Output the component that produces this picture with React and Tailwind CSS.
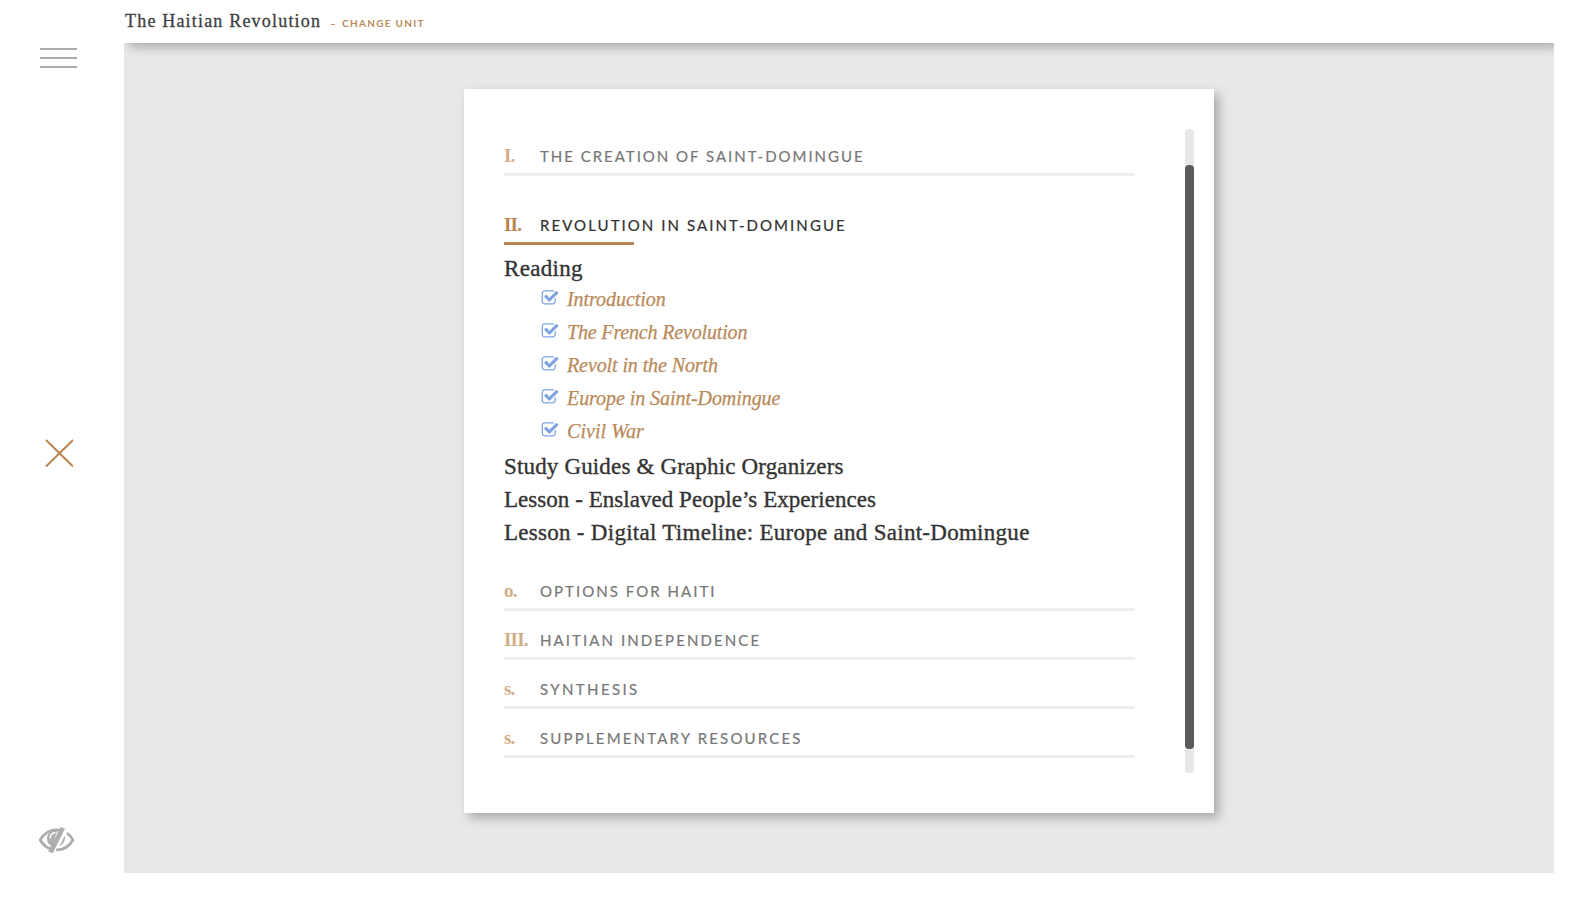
import React from "react";

const readings = [
  { title: "Introduction", tracking: "tracking-[-0.04px]" },
  { title: "The French Revolution", tracking: "tracking-[-0.16px]" },
  { title: "Revolt in the North", tracking: "tracking-[-0.1px]" },
  { title: "Europe in Saint-Domingue", tracking: "tracking-[-0.06px]" },
  { title: "Civil War", tracking: "tracking-[0.05px]" },
];

const lessons = [
  { title: "Study Guides & Graphic Organizers", tracking: "tracking-[0.16px]" },
  { title: "Lesson - Enslaved People’s Experiences", tracking: "tracking-[0.04px]" },
  { title: "Lesson - Digital Timeline: Europe and Saint-Domingue", tracking: "tracking-[0.28px]" },
];

const laterChapters = [
  { mark: "o.", title: "OPTIONS FOR HAITI", tracking: "tracking-[2.03px]" },
  { mark: "III.", title: "HAITIAN INDEPENDENCE", tracking: "tracking-[2.09px]" },
  { mark: "s.", title: "SYNTHESIS", tracking: "tracking-[2.38px]" },
  { mark: "s.", title: "SUPPLEMENTARY RESOURCES", tracking: "tracking-[2.18px]" },
];

function CheckIcon() {
  return (
    <svg viewBox="0 0 1792 1792" className="size-[18px] shrink-0 fill-[#7ea3e0]" aria-hidden="true">
      <path d="M1472 930v318q0 119-84.5 203.5t-203.5 84.5h-832q-119 0-203.5-84.5t-84.5-203.5v-832q0-119 84.5-203.5t203.5-84.5h832q63 0 117 25 15 7 18 23 3 17-9 29l-49 49q-10 10-23 10-3 0-9-2-23-6-45-6h-832q-66 0-113 47t-47 113v832q0 66 47 113t113 47h832q66 0 113-47t47-113v-254q0-13 9-22l64-64q10-10 23-10 6 0 12 3 20 8 20 29zm231-489l-814 814q-24 24-57 24t-57-24l-430-430q-24-24-24-57t24-57l110-110q24-24 57-24t57 24l263 263 647-647q24-24 57-24t57 24l110 110q24 24 24 57t-24 57z" />
    </svg>
  );
}

function EyeOffIcon() {
  return (
    <svg viewBox="0 0 38 28" className="h-7 w-[38px]" fill="none" aria-hidden="true">
      <g stroke="#adadad" strokeWidth="2.7">
        <path d="M22 4.3C12 2.6 6 7.500 2.200 14c2.700 4.700 6.200 7.700 11 9" />
        <path d="M29 7.200c2.700 1.800 4.600 4.200 5.900 6.800-3.700 6.600-9.400 10-16.700 9.900" />
      </g>
      <path d="M19.500 3.800c-7-.2-10.500 4-10.500 8.700 0 3.600 1.800 6.500 5 8z" fill="#adadad" />
      <path d="M26.800 9.800c.8 4-1 8.300-5.300 10.200z" fill="#adadad" />
      <path d="M12.300 12c0-3 1.700-5 4.700-5.300" stroke="#fff" strokeWidth="1.500" strokeLinecap="round" />
      <path d="M22.600 1L27 2.500 14.800 27.200 10.200 25.500z" fill="#adadad" />
    </svg>
  );
}

function Chapter({ mark, title, tracking, className }) {
  return (
    <a className={`flex w-[631px] shrink-0 items-end border-b-[3px] border-[#eeeeee] pb-[7px] ${className}`}>
      <span className="flex items-baseline leading-5">
        <span className="w-9 font-['Liberation_Serif',serif] text-[19px] font-bold tracking-[-0.8px] text-[#d2ad87]">{mark}</span>
        <span className={`whitespace-nowrap font-[Lato,sans-serif] text-[15px] text-[#777777] [-webkit-text-stroke:0.2px] ${tracking}`}>{title}</span>
      </span>
    </a>
  );
}

export default function App() {
  return (
    <div className="flex h-[902px] w-[1579px] overflow-hidden bg-white pb-[29px] pr-[25px]">
      <aside className="flex w-[124px] shrink-0 flex-col items-start pt-12">
        <button className="ml-10 flex w-[37px] flex-col gap-[7px]" aria-label="Menu">
          <span className="h-0.5 w-full bg-[#aaaaaa]" />
          <span className="h-0.5 w-full bg-[#aaaaaa]" />
          <span className="h-0.5 w-full bg-[#aaaaaa]" />
        </button>
        <button className="ml-[45px] mt-[371px]" aria-label="Close">
          <svg viewBox="0 0 28 28" className="size-7" aria-hidden="true">
            <path d="M1 1l27 26.500M28 1L1 27.500" stroke="#b98450" strokeWidth="2" />
          </svg>
        </button>
        <button className="mb-[19px] ml-[38px] mt-auto" aria-label="Hide">
          <EyeOffIcon />
        </button>
      </aside>

      <div className="flex flex-1 flex-col overflow-hidden bg-[#e8e8e8]">
        <header className="flex h-[43px] shrink-0 items-start bg-white pt-[9px] shadow-[5px_4px_10px_rgba(0,0,0,0.27)]">
          <h1 className="w-[206px] whitespace-nowrap pl-px font-['Liberation_Serif',serif] text-lg leading-6 tracking-[1.19px] text-[#3f3f3f] [-webkit-text-stroke:0.3px]">The Haitian Revolution</h1>
          <a className="flex whitespace-nowrap pt-1 font-[Lato,sans-serif] text-[10px] leading-5 font-bold tracking-[1.3px] text-[#b98a5a]">
            <span className="w-3">–</span>CHANGE UNIT
          </a>
        </header>

        <main className="flex flex-1 justify-center pt-[46px]">
          <section className="flex h-[724px] w-[750px] justify-between bg-white py-10 pl-10 pr-5 shadow-[5px_5px_10px_rgba(0,0,0,0.27)]">
            <div className="flex w-[631px] flex-col">
              <Chapter mark="I." title="THE CREATION OF SAINT-DOMINGUE" tracking="tracking-[1.98px]" className="h-[47px]" />

              <div className="flex h-[69px] shrink-0 flex-col justify-end">
                <div className="flex items-baseline pb-[7px] leading-5">
                  <span className="w-9 font-['Liberation_Serif',serif] text-[19px] font-bold tracking-[-0.8px] text-[#b98450]">II.</span>
                  <span className="whitespace-nowrap font-[Lato,sans-serif] text-[15px] tracking-[2.06px] text-[#303030] [-webkit-text-stroke:0.2px]">REVOLUTION IN SAINT-DOMINGUE</span>
                </div>
                <div className="h-[3px] w-[130px] bg-[#b88555]" />
              </div>

              <h2 className="mt-[7px] h-[30px] font-['Liberation_Serif',serif] text-[23px] leading-[33px] tracking-[0.3px] text-[#333333] [-webkit-text-stroke:0.35px]">Reading</h2>
              <ul className="pl-[37px]">
                {readings.map(({ title, tracking }) => (
                  <li key={title} className="flex h-[33px] items-start">
                    <span className="pt-[7px]"><CheckIcon /></span>
                    <a className={`ml-2 whitespace-nowrap pt-px font-['Liberation_Serif',serif] text-xl leading-[33px] italic text-[#b98a5a] [-webkit-text-stroke:0.25px] ${tracking}`}>{title}</a>
                  </li>
                ))}
              </ul>
              <div className="mb-[13px] mt-[3px]">
                {lessons.map(({ title, tracking }) => (
                  <h2 key={title} className={`h-[33px] whitespace-nowrap font-['Liberation_Serif',serif] text-[23px] leading-[33px] text-[#333333] [-webkit-text-stroke:0.35px] ${tracking}`}>{title}</h2>
                ))}
              </div>

              {laterChapters.map((chapter) => (
                <Chapter key={chapter.title} {...chapter} className="h-[49px]" />
              ))}
            </div>

            <div className="h-[644px] w-[9px] rounded bg-[#e8e8e8] pt-9">
              <div className="h-[584px] w-full rounded bg-[#5a5a5a]" />
            </div>
          </section>
        </main>
      </div>
    </div>
  );
}
